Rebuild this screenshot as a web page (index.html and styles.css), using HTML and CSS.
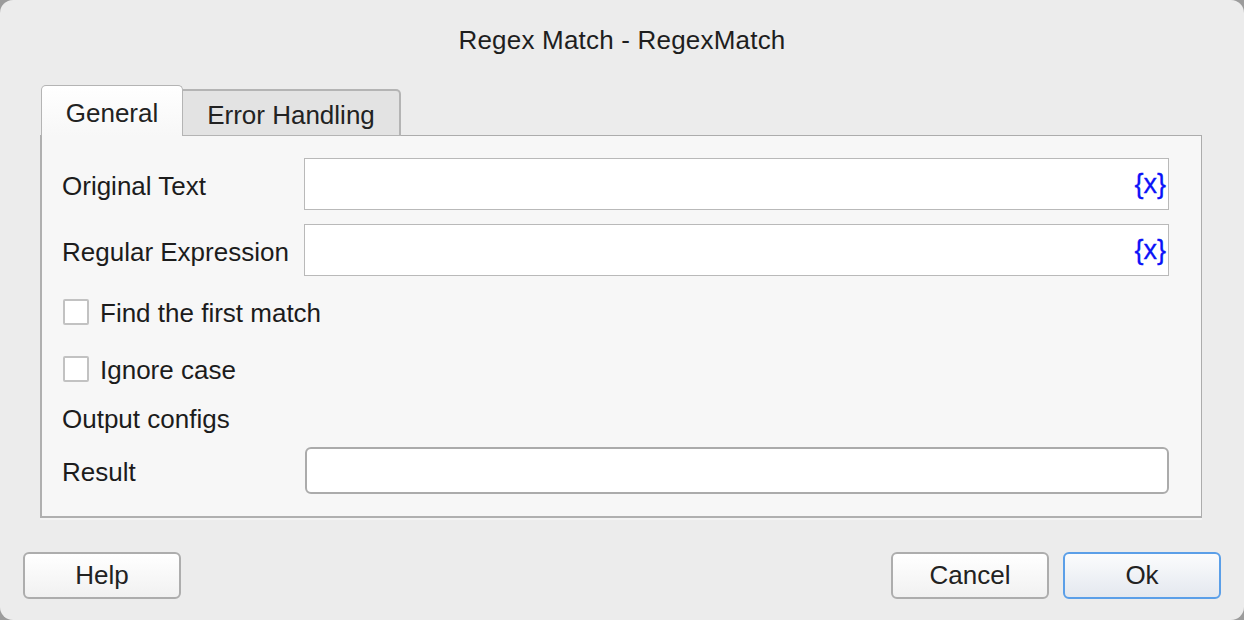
FILE: index.html
```html
<!DOCTYPE html>
<html>
<head>
<meta charset="utf-8">
<link rel="stylesheet" href="styles.css">
</head>
<body>
<div class="window">
  <div class="title">Regex Match - RegexMatch</div>
  <div class="tabs">
    <div class="tab active">General</div>
    <div class="tab">Error Handling</div>
  </div>
  <div class="panel">
    <div class="row field-row">
      <div class="label">Original Text</div>
      <div class="field"><span class="var">{x}</span></div>
    </div>
    <div class="row field-row second">
      <div class="label">Regular Expression</div>
      <div class="field"><span class="var">{x}</span></div>
    </div>
    <div class="row check-row first-check">
      <span class="box"></span><span class="check-label">Find the first match</span>
    </div>
    <div class="row check-row second-check">
      <span class="box"></span><span class="check-label">Ignore case</span>
    </div>
    <div class="row section">Output configs</div>
    <div class="row result-row">
      <div class="label">Result</div>
      <div class="field rounded"></div>
    </div>
  </div>
  <div class="buttons">
    <button class="btn">Help</button>
    <div class="spacer"></div>
    <button class="btn">Cancel</button>
    <button class="btn primary">Ok</button>
  </div>
</div>
</body>
</html>
```

FILE: styles.css
```css
html, body {
  margin: 0;
  padding: 0;
  background: #9c9c9c;
}
body {
  font-family: "Liberation Sans", Arial, sans-serif;
  color: #1c1c1c;
}
.window {
  width: 1244px;
  height: 620px;
  box-sizing: border-box;
  background: #ececec;
  border-radius: 13px;
  display: flex;
  flex-direction: column;
  overflow: hidden;
}
.title {
  margin-top: 25px;
  height: 30px;
  line-height: 30px;
  text-align: center;
  font-size: 26px;
  color: #1e1e1e;
  letter-spacing: 0.2px;
}
.tabs {
  margin-top: 30px;
  margin-left: 41px;
  display: flex;
  align-items: flex-end;
  height: 51px;
  margin-bottom: -1px;
  position: relative;
  z-index: 1;
}
.tab {
  box-sizing: border-box;
  width: 218px;
  height: 47px;
  border: 2px solid #b4b4b4;
  border-bottom: 1px solid #b4b4b4;
  border-left: none;
  border-radius: 0 5px 0 0;
  background: #e3e3e3;
  font-size: 26px;
  color: #222;
  display: flex;
  align-items: center;
  justify-content: center;
  padding-top: 4px;
}
.tab.active {
  width: 142px;
  height: 51px;
  border: 1px solid #b4b4b4;
  border-bottom: none;
  border-radius: 5px 5px 0 0;
  background: linear-gradient(#ffffff, #f7f7f7);
  padding-top: 7px;
  padding-bottom: 3px;
}
.panel {
  margin: 0 42px 0 40px;
  box-sizing: border-box;
  height: 383px;
  border: 1px solid #acacac;
  border-left: 2px solid #b0b0b0;
  border-bottom: 2px solid #b0b0b0;
  background: #f7f7f7;
  padding: 22px 32px 0 20px;
  display: flex;
  flex-direction: column;
  box-shadow: 0 2px 0 #f4f4f4;
}
.row {
  display: flex;
  align-items: center;
  font-size: 26px;
}
.label {
  width: 242px;
  flex: none;
  padding-top: 4px;
}
.field {
  flex: 1;
  height: 52px;
  box-sizing: border-box;
  background: #fff;
  border: 1px solid #b9b9b9;
  display: flex;
  align-items: center;
  justify-content: flex-end;
  padding-right: 2px;
}
.var {
  color: #0b12f8;
  font-family: "Liberation Sans", Arial, sans-serif;
  font-size: 27px;
  padding-top: 1px;
  -webkit-text-stroke: 0.3px #0b12f8;
}
.field-row.second {
  margin-top: 14px;
}
.check-row {
  height: 40px;
}
.check-label {
  padding-top: 2px;
}
.first-check {
  margin-top: 16px;
}
.second-check {
  margin-top: 17px;
}
.box {
  width: 26px;
  height: 26px;
  box-sizing: border-box;
  border: 2px solid #c2c2c2;
  border-radius: 2px;
  background: #fff;
  margin-left: 1px;
  margin-right: 11px;
}
.section {
  height: 30px;
  margin-top: 15px;
}
.result-row {
  margin-top: 13px;
}
.field.rounded {
  height: 47px;
  border: 2px solid #ababab;
  border-radius: 6px;
  margin-left: 1px;
}
.buttons {
  display: flex;
  margin-top: 34px;
  padding: 0 23px;
  gap: 14px;
}
.spacer {
  flex: 1;
}
.btn {
  width: 158px;
  height: 47px;
  box-sizing: border-box;
  border: 2px solid #adadad;
  border-radius: 6px;
  background: linear-gradient(#ffffff, #f1f1f1);
  font-family: "Liberation Sans", Arial, sans-serif;
  font-size: 26px;
  color: #222;
  padding: 0;
}
.btn.primary {
  border-color: #5b9fe8;
  background: linear-gradient(#fbfcfd, #e4e8ef);
}
```
